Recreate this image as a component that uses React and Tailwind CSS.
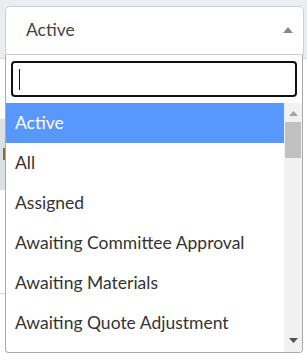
import React from 'react';

const options = [
  'Active',
  'All',
  'Assigned',
  'Awaiting Committee Approval',
  'Awaiting Materials',
  'Awaiting Quote Adjustment',
];

export default function App() {
  return (
    <div className="w-[307px] h-[355px] bg-white relative overflow-hidden" style={{ fontFamily: 'Lato, "Open Sans", sans-serif' }}>
      {/* page behind the dropdown */}
      <div className="absolute inset-x-0 top-0 h-[59px] bg-[#ebeef1] border-b border-[#d6d9dd]" />
      <div className="absolute left-0 top-[119px] w-[6px] h-[71px] bg-[#dcdfe3]">
        <div className="mt-[29px] ml-[3px] w-[2px] h-[12px] bg-[#8a6a3a]" />
      </div>
      <div className="absolute left-0 top-[293px] w-[6px] h-px bg-[#d6d9dd]" />

      <div className="relative pt-[6px] pl-[5px] w-[304px]">
        {/* select */}
        <div className="h-[49px] bg-white border border-[#ccd0d4] rounded-t-[5px] flex items-center justify-between pl-[20px] pr-[10px]">
          <span className="text-[17.5px] text-[#444]">Active</span>
          <svg width="10" height="6" viewBox="0 0 10 6" className="mb-[1px]">
            <path d="M0 6 L5 0 L10 6 Z" fill="#888" />
          </svg>
        </div>

        {/* dropdown */}
        <div className="w-[298px] h-[298px] bg-white border border-[#aaa] border-t-0 rounded-b-[4px] flex flex-col overflow-hidden">
          <div className="px-[5px] pt-[6px] pb-[6px]">
            <div className="h-[36px] border-2 border-[#111] rounded-[4px] flex items-center pl-[6px]">
              <div className="w-px h-[21px] bg-[#111]" />
            </div>
          </div>
          <div className="flex flex-1 min-h-0">
            <div className="flex-1">
              {options.map((o, i) => (
                <div
                  key={o}
                  className={`h-[40px] flex items-center pl-[9px] text-[17.5px] ${i === 0 ? 'bg-[#5897fb] text-white' : 'text-[#333]'}`}
                >
                  {o}
                </div>
              ))}
            </div>
            <div className="w-[18px] bg-[#f1f1f1] flex flex-col items-center">
              <svg width="9" height="5" viewBox="0 0 9 5" className="mt-[8px]">
                <path d="M0 5 L4.5 0 L9 5 Z" fill="#a3a3a3" />
              </svg>
              <div className="mt-[6px] w-[16px] h-[36px] bg-[#c1c1c1]" />
              <div className="flex-1" />
              <svg width="9" height="5" viewBox="0 0 9 5" className="mb-[9px]">
                <path d="M0 0 L9 0 L4.5 5 Z" fill="#505050" />
              </svg>
            </div>
          </div>
        </div>
      </div>
    </div>
  );
}
